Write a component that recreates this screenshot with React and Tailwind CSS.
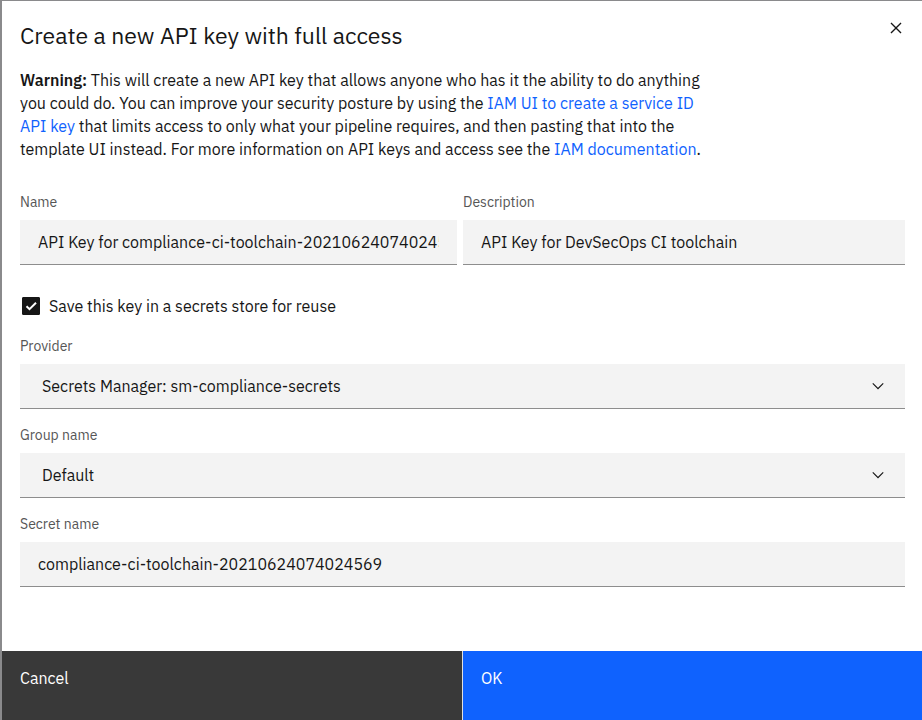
import React from "react";

const fieldBox =
  "block w-full h-[45px] rounded-none border-0 border-b border-[#8d8d8d] bg-[#f3f3f3] text-base text-[#161616] outline-none focus:ring-2 focus:ring-inset focus:ring-[#0f62fe]";

function Label({ htmlFor, children }) {
  return (
    <label htmlFor={htmlFor} className="mb-2 block text-sm leading-5 text-[#565656]">
      {children}
    </label>
  );
}

function TextField({ id, label, value }) {
  return (
    <div>
      <Label htmlFor={id}>{label}</Label>
      <input id={id} type="text" defaultValue={value} className={`${fieldBox} px-[18px]`} />
    </div>
  );
}

function SelectField({ id, label, options }) {
  return (
    <div>
      <Label htmlFor={id}>{label}</Label>
      <div className="relative">
        <select id={id} className={`${fieldBox} appearance-none pr-12 pl-[22px]`}>
          {options.map((option) => (
            <option key={option}>{option}</option>
          ))}
        </select>
        <svg
          viewBox="0 0 16 16"
          className="pointer-events-none absolute top-[13px] right-[18px] size-[18px] fill-[#161616]"
          aria-hidden="true"
        >
          <path d="M8 11 3 6l.7-.7L8 9.6l4.3-4.3L13 6z" />
        </svg>
      </div>
    </div>
  );
}

function Link({ children }) {
  return (
    <a href="#" className="text-[#0f62fe] hover:underline">
      {children}
    </a>
  );
}

export default function App() {
  return (
    <div className="flex min-h-screen flex-col border-t border-l-2 border-[#8a8a8c] bg-white font-['IBM_Plex_Sans','Noto_Sans',sans-serif] text-base text-[#161616]">
      <div role="dialog" aria-labelledby="dialog-title" className="flex flex-1 flex-col">
        <header className="flex items-start justify-between pt-[18px] pr-[17px] pl-[18px]">
          <h1 id="dialog-title" className="text-[23px] leading-8">
            Create a new API key with full access
          </h1>
          <button type="button" aria-label="Close" className="flex h-[18px] w-[18px] items-center justify-center">
            <svg viewBox="0 0 16 16" className="size-[22px] shrink-0 fill-[#161616]" aria-hidden="true">
              <path d="M12 4.7 11.3 4 8 7.3 4.7 4 4 4.7 7.3 8 4 11.3l.7.7L8 8.7l3.3 3.3.7-.7L8.7 8z" />
            </svg>
          </button>
        </header>

        <p className="mt-[18px] px-[18px] leading-[23px]">
          <strong className="font-semibold">Warning:</strong> This will create a new API key that allows anyone who has it the ability to do anything
          <br />
          you could do. You can improve your security posture by using the{" "}
          <Link>
            IAM UI to create a service ID
            <br />
            API key
          </Link>{" "}
          that limits access to only what your pipeline requires, and then pasting that into the
          <br />
          template UI instead. For more information on API keys and access see the <Link>IAM documentation</Link>.
        </p>

        <div className="mt-[31px] grid grid-cols-2">
          <div className="pr-[5px] pl-[18px]">
            <TextField id="name" label="Name" value="API Key for compliance-ci-toolchain-20210624074024569" />
          </div>
          <div className="pr-[17px] pl-px">
            <TextField id="description" label="Description" value="API Key for DevSecOps CI toolchain" />
          </div>
        </div>

        <div className="flex flex-col gap-4 pt-[29px] pr-[17px] pb-16 pl-[18px]">
          <label className="mb-[2px] flex items-center gap-[9px] pl-[2px] leading-6">
            <span className="grid size-[18px] place-items-center">
              <input
                type="checkbox"
                defaultChecked
                className="peer col-start-1 row-start-1 size-[18px] appearance-none rounded-[1px] border border-[#161616] checked:bg-[#161616]"
              />
              <svg
                viewBox="0 0 18 18"
                className="pointer-events-none invisible col-start-1 row-start-1 size-[18px] peer-checked:visible"
                fill="none"
                stroke="#fff"
                strokeWidth="2"
                aria-hidden="true"
              >
                <path d="m4.5 9.2 3 3 6.5-6.4" />
              </svg>
            </span>
            Save this key in a secrets store for reuse
          </label>
          <SelectField id="provider" label="Provider" options={["Secrets Manager: sm-compliance-secrets"]} />
          <SelectField id="group" label="Group name" options={["Default"]} />
          <TextField id="secret" label="Secret name" value="compliance-ci-toolchain-20210624074024569" />
        </div>

        <footer className="mt-auto grid h-[69px] grid-cols-2 text-white">
          <button type="button" className="flex items-start bg-[#393939] px-[18px] pt-[15px] text-left leading-6">
            Cancel
          </button>
          <button
            type="button"
            className="flex items-start border-l border-[#e0e0e0] bg-[#0f62fe] px-[18px] pt-[15px] text-left leading-6"
          >
            OK
          </button>
        </footer>
      </div>
    </div>
  );
}
